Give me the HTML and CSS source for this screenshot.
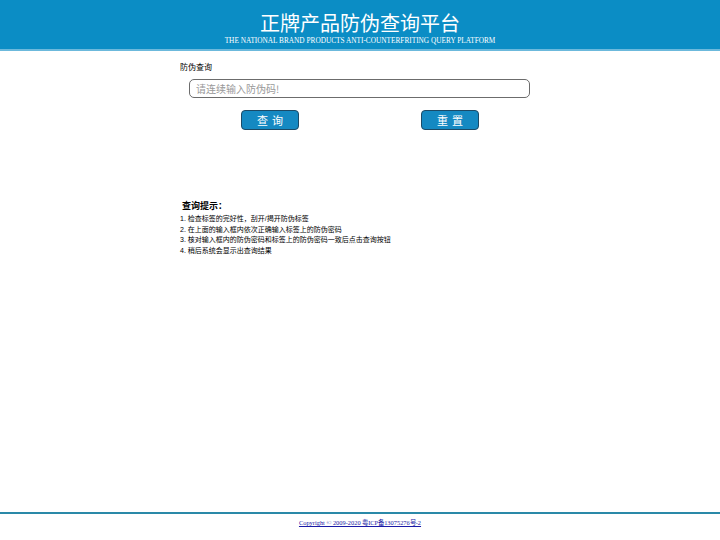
FILE: index.html
```html
<!DOCTYPE html>
<html lang="zh-CN">

<head>
    <meta charset="UTF-8">
    <meta name="viewport" content="width=device-width, initial-scale=1.0">
    <title>正牌产品防伪查询平台</title>
    <link rel="stylesheet" href="styles.css">
</head>

<body>
    <div class="page">
        <!-- 顶部 -->
        <div class="header">
            <h1>正牌产品防伪查询平台</h1>
            <p>THE NATIONAL BRAND PRODUCTS ANTI-COUNTERFRITING QUERY PLATFORM</p>
        </div>

        <div class="main">
            <div class="query">
                <div class="label">防伪查询</div>
                <div class="input-row">
                    <input type="text" placeholder="请连续输入防伪码!">
                </div>
                <div class="btns">
                    <div class="btn-cell"><button class="btn">查询</button></div>
                    <div class="btn-cell"><button class="btn">重置</button></div>
                </div>
            </div>

            <!-- 查询提示 -->
            <div class="tips">
                <h3>查询提示：</h3>
                <ul>
                    <li>1. 检查标签的完好性，刮开/揭开防伪标签</li>
                    <li>2. 在上面的输入框内依次正确输入标签上的防伪密码</li>
                    <li>3. 核对输入框内的防伪密码和标签上的防伪密码一致后点击查询按钮</li>
                    <li>4. 稍后系统会显示出查询结果</li>
                </ul>
            </div>
        </div>

        <div class="footer">
            <a href="#">Copyright © 2009-2020 粤ICP备13075276号-2</a>
        </div>
    </div>
</body>

</html>
```

FILE: styles.css
```css
* {
    box-sizing: border-box;
}

body {
    margin: 0;
    font-family: "Liberation Sans", "Noto Sans CJK SC", sans-serif;
    color: #000;
}

.page {
    min-height: 540px;
    display: flex;
    flex-direction: column;
}

/* 顶部 */
.header {
    height: 51px;
    background-color: #0b8dc5;
    border-bottom: 2px solid #6cb9dc;
    text-align: center;
    color: #fff;
    padding-top: 9px;
}

.header h1 {
    margin: 0;
    font-size: 20px;
    font-weight: normal;
    line-height: 27px;
    font-family: "Noto Sans CJK SC", sans-serif;
}

.header p {
    margin: 0;
    font-family: "Liberation Serif", serif;
    font-size: 7.3px;
    line-height: 10px;
}

.main {
    width: 360px;
    margin: 0 auto;
    flex: 1;
}

.query .label {
    font-size: 8px;
    margin-top: 11px;
    line-height: 11px;
}

.input-row {
    padding: 6px 10px 0 9px;
}

.input-row input {
    width: 100%;
    height: 19px;
    border: 1px solid #6c6c6c;
    border-radius: 5px;
    padding: 0 6px;
    font-size: 10px;
    font-family: "Noto Sans CJK SC", sans-serif;
    outline: none;
}

.input-row input::placeholder {
    color: #999;
}

.btns {
    display: flex;
    margin-top: 12px;
}

.btn-cell {
    flex: 1;
    display: flex;
    justify-content: center;
}

.btn {
    width: 58px;
    height: 20px;
    border: 1px solid #1c4a66;
    border-radius: 4px;
    background: #1589c2;
    color: #fff;
    font-size: 11px;
    letter-spacing: 4px;
    padding: 0 0 0 4px;
    font-family: "Noto Sans CJK SC", sans-serif;
    line-height: 18px;
    cursor: pointer;
}

/* 查询提示 */
.tips {
    margin-top: 70px;
}

.tips h3 {
    margin: 0 0 1px 2px;
    font-size: 9px;
    font-weight: bold;
    line-height: 13px;
}

.tips ul {
    margin: 0;
    padding: 0;
    list-style: none;
}

.tips li {
    font-size: 7px;
    line-height: 10.7px;
}

/* 底部 */
.footer {
    border-top: 2px solid #2a89a8;
    height: 28px;
    text-align: center;
    padding-top: 1px;
    line-height: 10px;
}

.footer a {
    font-family: "Liberation Serif", serif;
    font-size: 6.4px;
    color: #1a1aa6;
}
```
